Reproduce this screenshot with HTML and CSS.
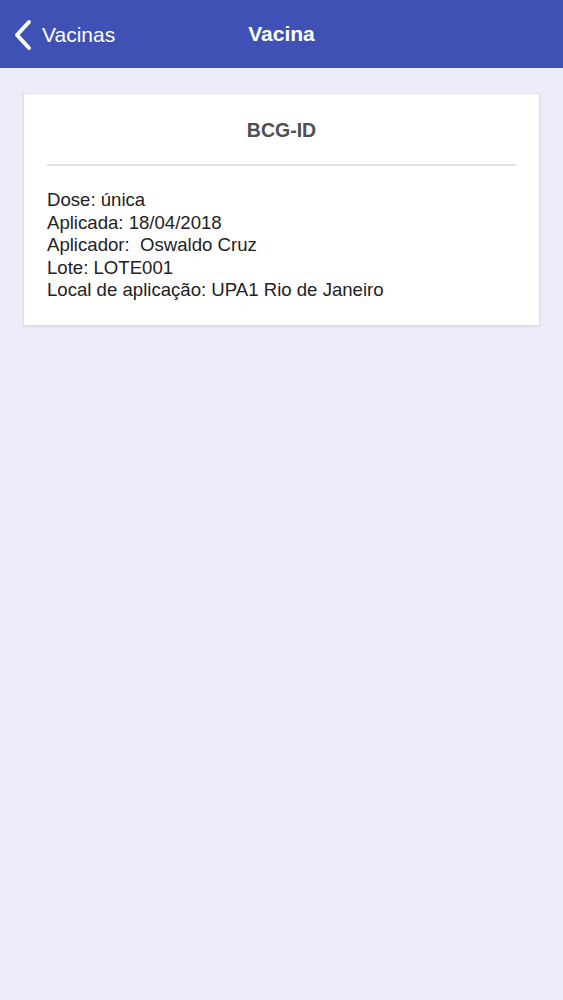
FILE: index.html
```html
<!DOCTYPE html>
<html lang="pt">
<head>
    <meta charset="UTF-8">
    <title>Vacina</title>
    <link rel="stylesheet" href="styles.css">
</head>
<body>
    <header class="navbar">
        <a class="back" href="#">
            <svg class="chevron" width="20" height="32" viewBox="0 0 20 32">
                <path d="M16 3 L4 16 L16 29" fill="none" stroke="#fff" stroke-width="4" stroke-linecap="round" stroke-linejoin="round"/>
            </svg>
            <span>Vacinas</span>
        </a>
        <h1 class="title">Vacina</h1>
    </header>

    <main class="content">
        <div class="card">
            <h2 class="card-title">BCG-ID</h2>
            <hr class="divider">
            <div class="details">
                <p>Dose: única</p>
                <p>Aplicada: 18/04/2018</p>
                <p>Aplicador:&nbsp; Oswaldo Cruz</p>
                <p>Lote: LOTE001</p>
                <p>Local de aplicação: UPA1 Rio de Janeiro</p>
            </div>
        </div>
    </main>
</body>
</html>
```

FILE: styles.css
```css
body {
    margin: 0;
    font-family: "Liberation Sans", Arial, sans-serif;
    background-color: #ececf8;
    min-height: 1000px;
}
.navbar {
    position: relative;
    height: 68px;
    background-color: #3f51b5;
    display: flex;
    align-items: center;
    justify-content: center;
}
.back {
    position: absolute;
    left: 13px;
    top: 19px;
    display: flex;
    align-items: center;
    gap: 9px;
    color: #fff;
    text-decoration: none;
    font-size: 21px;
}
.title {
    margin: 0;
    color: #fff;
    font-size: 21px;
    font-weight: bold;
}
.content {
    padding: 25px 23px;
}
.card {
    background-color: #fff;
    border: 1px solid #dfdfe6;
    box-shadow: 0 1px 2px rgba(0, 0, 0, 0.08);
    padding: 0 23px 23px;
}
.card-title {
    margin: 0;
    padding: 25px 0 0;
    text-align: center;
    font-size: 19.5px;
    font-weight: bold;
    color: #505050;
    line-height: 22px;
}
.divider {
    border: none;
    border-top: 2px solid #e2e2e2;
    margin: 23px 0 23px;
}
.details p {
    margin: 0;
    font-size: 18.6px;
    line-height: 22.5px;
    color: #222;
}
```
